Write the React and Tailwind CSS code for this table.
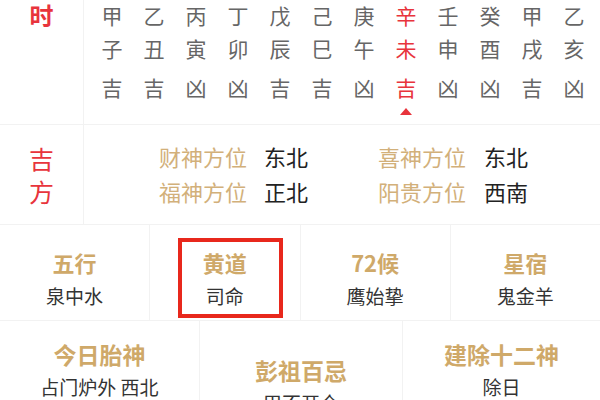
import React from "react";

const gan = ["甲", "乙", "丙", "丁", "戊", "己", "庚", "辛", "壬", "癸", "甲", "乙"];
const zhi = ["子", "丑", "寅", "卯", "辰", "巳", "午", "未", "申", "酉", "戌", "亥"];
const luck = ["吉", "吉", "凶", "凶", "吉", "吉", "凶", "吉", "凶", "凶", "吉", "凶"];
const current = 7;

const font = { fontFamily: '"Noto Sans CJK SC", "Noto Sans", sans-serif' };

const Cell = ({ title, value }) => (
    <div className="flex-1 flex flex-col items-center pt-[21px] border-r border-[#f2f2f2] last:border-r-0">
        <div className="text-[22px] leading-[33px] font-bold text-[#cfa969]">{title}</div>
        <div className="text-[19px] leading-[33px] text-[#333]">{value}</div>
    </div>
);

const App = () => {
    return (
        <div className="relative w-[600px] h-[400px] overflow-hidden bg-white" style={font}>
            {/* 时辰 */}
            <div className="flex h-[125px] border-b border-[#f2f2f2]">
                <div className="w-[84px] border-r border-[#f2f2f2] flex justify-center">
                    <div className="text-[24px] leading-[30px] font-bold text-[#e8343c]">时</div>
                </div>
                <div className="grid grid-cols-12 w-[504px] ml-[7px]">
                    {gan.map((g, i) => {
                        const on = i === current;
                        const color = on ? "text-[#e8343c]" : "text-[#666]";
                        return (
                            <div key={i} className={`flex flex-col items-center text-[21px] ${color}`}>
                                <div className="h-[30px] leading-[30px]">{g}</div>
                                <div className="h-[36px] leading-[36px]">{zhi[i]}</div>
                                <div className="h-[42px] leading-[42px]">{luck[i]}</div>
                                {on && (
                                    <div className="w-0 h-0 border-l-[6px] border-r-[6px] border-b-[7px] border-l-transparent border-r-transparent border-b-[#e8343c]" />
                                )}
                            </div>
                        );
                    })}
                </div>
            </div>

            {/* 吉方 */}
            <div className="flex h-[100px] border-b border-[#f2f2f2]">
                <div className="w-[84px] border-r border-[#f2f2f2] flex flex-col items-center justify-center gap-[1px] text-[25px] leading-[32px] text-[#e8343c]">
                    <div>吉</div>
                    <div>方</div>
                </div>
                <div className="flex flex-col justify-center text-[22px] leading-[35px] pl-[75px] pb-[2px]">
                    <div className="flex">
                        <span className="w-[105px] text-[#d2b07a]">财神方位</span>
                        <span className="w-[114px] text-[#222]">东北</span>
                        <span className="w-[106px] text-[#d2b07a]">喜神方位</span>
                        <span className="text-[#222]">东北</span>
                    </div>
                    <div className="flex">
                        <span className="w-[105px] text-[#d2b07a]">福神方位</span>
                        <span className="w-[114px] text-[#222]">正北</span>
                        <span className="w-[106px] text-[#d2b07a]">阳贵方位</span>
                        <span className="text-[#222]">西南</span>
                    </div>
                </div>
            </div>

            {/* 五行 黄道 72候 星宿 */}
            <div className="flex h-[96px] border-b border-[#f2f2f2]">
                <Cell title="五行" value="泉中水" />
                <Cell title="黄道" value="司命" />
                <Cell title="72候" value="鹰始挚" />
                <Cell title="星宿" value="鬼金羊" />
            </div>

            {/* highlight box over 黄道 */}
            <div className="absolute left-[178px] top-[238px] w-[105px] h-[80px] border-4 border-[#e8281c]" />

            {/* 胎神 彭祖 建除 */}
            <div className="flex h-[100px]">
                <div className="w-[200px] border-r border-[#f2f2f2] flex flex-col items-center pt-[17px]">
                    <div className="text-[23px] leading-[33px] font-bold text-[#cfa969]">今日胎神</div>
                    <div className="text-[19px] leading-[32px] text-[#333]">占门炉外 西北</div>
                </div>
                <div className="w-[203px] border-r border-[#f2f2f2] flex flex-col items-center pt-[33px]">
                    <div className="text-[23px] leading-[33px] font-bold text-[#cfa969]">彭祖百忌</div>
                    <div className="text-[19px] leading-[32px] text-[#333]">甲不开仓</div>
                </div>
                <div className="flex-1 flex flex-col items-center pt-[17px]">
                    <div className="text-[23px] leading-[33px] font-bold text-[#cfa969]">建除十二神</div>
                    <div className="text-[19px] leading-[32px] text-[#333]">除日</div>
                </div>
            </div>
        </div>
    );
};

export default App;
